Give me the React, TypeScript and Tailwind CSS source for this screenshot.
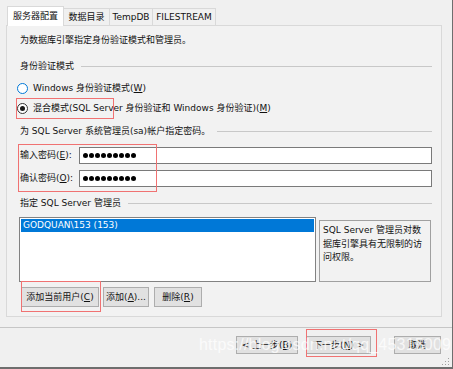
import React from "react";

const font = { fontFamily: '"DejaVu Sans", "Noto Sans CJK SC", sans-serif' };

const Dots = () => (
  <div className="flex gap-[1px] items-center">
    {Array.from({ length: 9 }).map((_, i) => (
      <span key={i} className="w-[5px] h-[5px] rounded-full bg-black" />
    ))}
  </div>
);

const GroupLabel = ({ children }: { children: React.ReactNode }) => (
  <div className="h-[24px] flex items-center">
    <span className="whitespace-nowrap">{children}</span>
    <div className="flex-1 h-px bg-[#c8c8c8] ml-[7px]" />
  </div>
);

const Btn = ({ children, className }: { children: React.ReactNode; className: string }) => (
  <div
    className={
      "h-[20px] bg-[#e1e1e1] border border-[#adadad] flex items-center justify-center whitespace-nowrap " +
      className
    }
  >
    {children}
  </div>
);

const App = () => {
  return (
    <div
      className="relative w-[453px] h-[369px] bg-[#f0f0f0] border-r border-b-2 border-[#6e6e6e] overflow-hidden text-[9px] text-[#111] leading-none flex flex-col"
      style={font}
    >
      {/* tabs */}
      <div className="flex items-end pl-[7px] pt-[6px] h-[26px]">
        <div className="relative z-10 w-[57px] h-[20px] bg-white border border-b-0 border-[#d9d9d9] flex items-center justify-center">
          服务器配置
        </div>
        <div className="w-[46px] h-[18px] border-t border-r border-[#d9d9d9] flex items-center justify-center">
          数据目录
        </div>
        <div className="w-[43px] h-[18px] border-t border-r border-[#d9d9d9] flex items-center justify-center">
          TempDB
        </div>
        <div className="w-[63px] h-[18px] border-t border-r border-[#d9d9d9] flex items-center justify-center">
          FILESTREAM
        </div>
      </div>

      {/* panel */}
      <div className="relative -mt-px ml-[6px] w-[436px] h-[292px] border border-[#d9d9d9] bg-[#f2f2f2] pl-[13px] pr-[9px] flex flex-col">
        <div className="h-[28px] flex items-center">为数据库引擎指定身份验证模式和管理员。</div>
        <GroupLabel>身份验证模式</GroupLabel>
        <div className="h-[20px] flex items-center -ml-[3px] gap-[5px]">
          <span className="w-[11px] h-[11px] rounded-full border border-[#0078d7] bg-white" />
          <span>
            Windows 身份验证模式(<u>W</u>)
          </span>
        </div>
        <div className="h-[21px] flex items-center -ml-[3px] gap-[5px]">
          <span className="w-[11px] h-[11px] rounded-full border border-[#333] bg-white flex items-center justify-center">
            <span className="w-[5px] h-[5px] rounded-full bg-[#1a1a1a]" />
          </span>
          <span>
            混合模式(SQL Server 身份验证和 Windows 身份验证)(<u>M</u>)
          </span>
        </div>
        <GroupLabel>为 SQL Server 系统管理员(sa)帐户指定密码。</GroupLabel>
        <div className="mt-[4px] flex items-center">
          <span className="w-[59px] whitespace-nowrap">
            输入密码(<u>E</u>):
          </span>
          <div className="flex-1 h-[17px] bg-white border border-[#7a7a7a] flex items-center pl-[3px]">
            <Dots />
          </div>
        </div>
        <div className="mt-[6px] flex items-center">
          <span className="w-[59px] whitespace-nowrap">
            确认密码(<u>O</u>):
          </span>
          <div className="flex-1 h-[17px] bg-white border border-[#7a7a7a] flex items-center pl-[3px]">
            <Dots />
          </div>
        </div>
        <div className="mt-[4px]">
          <GroupLabel>指定 SQL Server 管理员</GroupLabel>
        </div>
        <div className="mt-[2px] flex -ml-px gap-[3px]">
          <div className="w-[297px] h-[65px] bg-white border border-[#828282] p-px">
            <div className="h-[13px] bg-[#0078d7] text-white flex items-center pl-[2px]">GODQUAN\153 (153)</div>
          </div>
          <div className="mt-[3px] w-[112px] h-[62px] border border-[#a0a0a0] pl-[3px] pt-[3px] leading-[13.5px] whitespace-nowrap">
            SQL Server 管理员对数
            <br />
            据库引擎具有无限制的访
            <br />
            问权限。
          </div>
        </div>
        <div className="mt-[5px] flex gap-[4px]">
          <Btn className="w-[78px] ml-px">
            添加当前用户(<u>C</u>)
          </Btn>
          <Btn className="w-[46px]">
            添加(<u>A</u>)...
          </Btn>
          <Btn className="w-[48px] ml-[1px]">
            删除(<u>R</u>)
          </Btn>
        </div>

        {/* annotation boxes */}
        <div className="absolute left-[9px] top-[72px] w-[98px] h-[21px] border border-[#f07272]" />
        <div className="absolute left-[11px] top-[118px] w-[139px] h-[48px] border border-[#f07272]" />
        <div className="absolute left-[14px] top-[255px] w-[80px] h-[31px] border border-[#f07272]" />
      </div>

      {/* bottom bar */}
      <div className="mt-[10px] h-px bg-[#c6c6c6]" />
      <div className="relative mt-[8px] flex justify-end pr-[11px]">
        <Btn className="w-[62px] !h-[18px]">
          &lt; 上一步(<u>B</u>)
        </Btn>
        <Btn className="w-[65px] !h-[18px] ml-[8px]">
          下一步(<u>N</u>) &gt;
        </Btn>
        <Btn className="w-[47px] !h-[18px] ml-[23px]">取消</Btn>
        <div className="absolute left-[306px] -top-[7px] w-[71px] h-[28px] border border-[#f07272]" />
      </div>

      {/* watermark */}
      <div
        className="absolute left-[199px] top-[337px] text-[16px] text-white/75 whitespace-nowrap tracking-[0.2px]"
        style={{ fontFamily: '"Liberation Sans", sans-serif' }}
      >
        https://blog.csdn.net/qq_45315009
      </div>

      {/* size grip */}
      <svg className="absolute right-[2px] bottom-[1px]" width="8" height="8" viewBox="0 0 8 8">
        <rect x="6" y="0" width="1" height="1" fill="#a0a0a0" />
        <rect x="3" y="3" width="1" height="1" fill="#a0a0a0" />
        <rect x="6" y="3" width="1" height="1" fill="#a0a0a0" />
        <rect x="0" y="6" width="1" height="1" fill="#a0a0a0" />
        <rect x="3" y="6" width="1" height="1" fill="#a0a0a0" />
        <rect x="6" y="6" width="1" height="1" fill="#a0a0a0" />
      </svg>
    </div>
  );
};

export default App;
